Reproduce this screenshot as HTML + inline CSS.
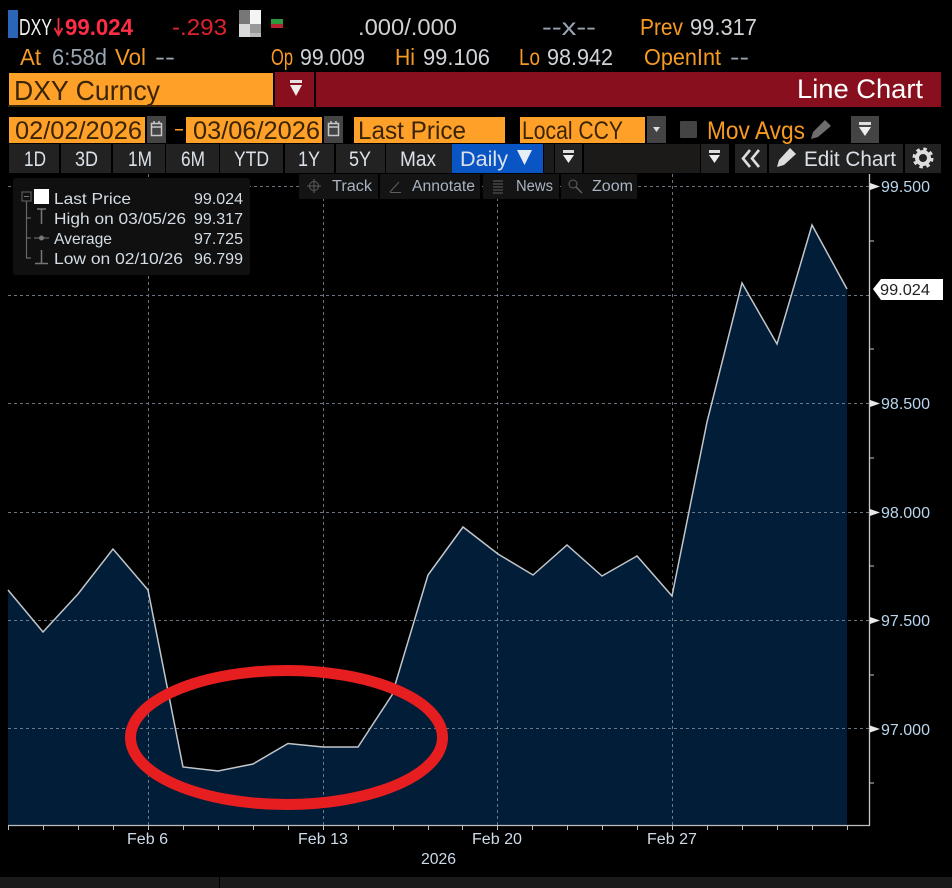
<!DOCTYPE html>
<html><head><meta charset="utf-8"><title>DXY Curncy Line Chart</title>
<style>
html,body{margin:0;padding:0;background:#000;width:952px;height:888px;overflow:hidden}
svg{display:block}
text{font-family:"Liberation Sans",sans-serif}
.o{fill:#f79a22}.g{fill:#9aa6b4}.d{fill:#3a2404}
</style></head><body>
<svg width="952" height="888" viewBox="0 0 952 888" xmlns="http://www.w3.org/2000/svg">
<rect width="952" height="888" fill="#000"/>
<!-- chart -->
<polygon points="8,590 43,632 78,594 113,549 148,590 183,767 218,771 253,764 288,743.5 323,747 358,747 392,695 428,575 463,527 498,554 533,575 567,545 602,576 637,556 672,596 707,422 742,283 777,344 812,225 847,289 847,825 8,825" fill="#021d38"/>
<g stroke="#8492a0" stroke-width="1" stroke-dasharray="3 3" fill="none" opacity=".8">
<path d="M8 186.500H869M8 295.500H869M8 403.500H869M8 512.500H869M8 620.500H869M8 728.500H869"/>
<path d="M148.500 174V825M323.500 174V825M497.500 174V825M672.500 174V825"/>
</g>
<polyline points="8,590 43,632 78,594 113,549 148,590 183,767 218,771 253,764 288,743.500 323,747 358,747 392,695 428,575 463,527 498,554 533,575 567,545 602,576 637,556 672,596 707,422 742,283 777,344 812,225 847,289" fill="none" stroke="#c2c6ca" stroke-width="1.500"/>
<!-- axes -->
<path d="M8 825.500H870" stroke="#bdbdbd" stroke-width="1.300"/>
<path d="M8.500 825V830M43.500 825V830M78.500 825V830M113.500 825V830M148.500 825V830M183.500 825V830M218.500 825V830M253.500 825V830M288.500 825V830M323.500 825V830M358.500 825V830M393.500 825V830M428.500 825V830M462.500 825V830M497.500 825V830M532.500 825V830M567.500 825V830M602.500 825V830M637.500 825V830M672.500 825V830M707.500 825V830M742.500 825V830M777.500 825V830M812.500 825V830M847.500 825V830" stroke="#bdbdbd" stroke-width="1"/>
<path d="M869.500 174V826" stroke="#c8c8c8" stroke-width="1.300"/>
<path d="M869 241H874M869 349H874M869 458H874M869 566H874M869 675H874M869 783H874" stroke="#c8c8c8" stroke-width="1"/>
<g fill="#e8e8e8"><path d="M870 183L880 186.500L870 190ZM870 509L880 512.500L870 516ZM870 400L880 403.500L870 407ZM870 617L880 620.500L870 624ZM870 725.500L880 729L870 732.500Z"/></g>
<g font-size="15.500" style="fill:#b9d6ee">
<text x="881" y="192" textLength="49" lengthAdjust="spacingAndGlyphs">99.500</text>
<text x="881" y="409" textLength="49" lengthAdjust="spacingAndGlyphs">98.500</text>
<text x="881" y="518" textLength="49" lengthAdjust="spacingAndGlyphs">98.000</text>
<text x="881" y="626" textLength="49" lengthAdjust="spacingAndGlyphs">97.500</text>
<text x="881" y="735" textLength="49" lengthAdjust="spacingAndGlyphs">97.000</text>
</g>
<polygon points="873,289 881,279 943,279 943,300 881,300" fill="#fff"/>
<text x="880" y="295" font-size="15.500" fill="#222" textLength="50" lengthAdjust="spacingAndGlyphs">99.024</text>
<g font-size="15.500" style="fill:#cfdcea">
<text x="127" y="844" textLength="41" lengthAdjust="spacingAndGlyphs">Feb 6</text>
<text x="298" y="844" textLength="50" lengthAdjust="spacingAndGlyphs">Feb 13</text>
<text x="472" y="844" textLength="50" lengthAdjust="spacingAndGlyphs">Feb 20</text>
<text x="647" y="844" textLength="50" lengthAdjust="spacingAndGlyphs">Feb 27</text>
<text x="421" y="864" textLength="35" lengthAdjust="spacingAndGlyphs">2026</text>
</g>
<!-- ellipse -->
<ellipse cx="286.500" cy="737.500" rx="156" ry="67" fill="none" stroke="#e61e20" stroke-width="11"/>
<!-- bottom -->
<rect x="0" y="877" width="952" height="11" fill="#1a1a1a"/><rect x="219" y="877" width="1" height="11" fill="#000"/>
<!-- top row -->
<rect x="8" y="10" width="10" height="28" fill="#2a66b8"/>
<text x="19" y="35" font-size="23" fill="#f4f4f4" textLength="33" lengthAdjust="spacingAndGlyphs">DXY</text>
<path d="M58.500 18V33M54.500 28L58.500 35L62.500 28" fill="none" stroke="#f0303f" stroke-width="1.800"/>
<text x="65" y="35" font-size="23" font-weight="700" fill="#ff2c46" textLength="68" lengthAdjust="spacingAndGlyphs">99.024</text>
<text x="172" y="35" font-size="23" fill="#e0222d" textLength="55" lengthAdjust="spacingAndGlyphs">-.293</text>
<rect x="239" y="10" width="22" height="27" fill="#bbb"/><rect x="250" y="10" width="11" height="14" fill="#f4f4f4"/><rect x="239" y="10" width="11" height="14" fill="#777"/><rect x="250" y="24" width="11" height="9" fill="#999"/><rect x="239" y="24" width="11" height="13" fill="#d8d8d8"/>
<rect x="271" y="19" width="12" height="5" fill="#2e9a3e"/><rect x="271" y="24" width="12" height="4" fill="#b52430"/>
<text x="358" y="35" font-size="23" fill="#d0d0d0" textLength="99" lengthAdjust="spacingAndGlyphs">.000/.000</text>
<text x="542" y="35" font-size="23" class="g" textLength="54" lengthAdjust="spacingAndGlyphs">--x--</text>
<text x="640" y="35" font-size="23" class="o" textLength="43" lengthAdjust="spacingAndGlyphs">Prev</text>
<text x="690" y="35" font-size="23" fill="#d0d4d8" textLength="67" lengthAdjust="spacingAndGlyphs">99.317</text>
<!-- second row -->
<g font-size="23">
<text x="20" y="65" class="o" textLength="21" lengthAdjust="spacingAndGlyphs">At</text>
<text x="52" y="65" class="g" textLength="55" lengthAdjust="spacingAndGlyphs">6:58d</text>
<text x="115" y="65" class="o" textLength="31" lengthAdjust="spacingAndGlyphs">Vol</text>
<text x="155" y="65" class="g" textLength="20" lengthAdjust="spacingAndGlyphs">--</text>
<text x="271" y="65" class="o" textLength="22" lengthAdjust="spacingAndGlyphs">Op</text>
<text x="300" y="65" fill="#d0d4d8" textLength="65" lengthAdjust="spacingAndGlyphs">99.009</text>
<text x="395" y="65" class="o" textLength="20" lengthAdjust="spacingAndGlyphs">Hi</text>
<text x="423" y="65" fill="#d0d4d8" textLength="67" lengthAdjust="spacingAndGlyphs">99.106</text>
<text x="519" y="65" class="o" textLength="21" lengthAdjust="spacingAndGlyphs">Lo</text>
<text x="547" y="65" fill="#d0d4d8" textLength="66" lengthAdjust="spacingAndGlyphs">98.942</text>
<text x="644" y="65" class="o" textLength="77" lengthAdjust="spacingAndGlyphs">OpenInt</text>
<text x="730" y="65" class="g" textLength="19" lengthAdjust="spacingAndGlyphs">--</text>
</g>
<!-- third row -->
<rect x="9" y="73" width="264" height="32" fill="#ffa028"/><rect x="8" y="105" width="266" height="2" fill="#3a2408"/>
<text x="14" y="100" font-size="28" class="d" textLength="146" lengthAdjust="spacingAndGlyphs">DXY Curncy</text>
<rect x="275" y="72" width="39" height="35" fill="#880f1e"/>
<rect x="290" y="80" width="12" height="3" fill="#e8e0e0"/><path d="M290 85H302L296 96Z" fill="#f0ecec"/>
<rect x="316" y="72" width="625" height="35" fill="#880f1e"/>
<text x="797" y="98" font-size="27" fill="#fff" textLength="126" lengthAdjust="spacingAndGlyphs">Line Chart</text>
<!-- fourth row -->
<rect x="9" y="117" width="136" height="26" fill="#ffa028"/>
<text x="15" y="139" font-size="25" class="d" textLength="127" lengthAdjust="spacingAndGlyphs">02/02/2026</text>
<rect x="147" y="116" width="19" height="27" fill="#444"/>
<path d="M151.500 123.500H161.500V135.500H151.500ZM151.500 127H161.500M154 121V124M159 121V124" fill="none" stroke="#c8c8c8" stroke-width="1.500"/>
<rect x="175" y="129" width="8" height="1.500" fill="#ffa028"/>
<rect x="186" y="117" width="136" height="26" fill="#ffa028"/>
<text x="193" y="139" font-size="25" class="d" textLength="127" lengthAdjust="spacingAndGlyphs">03/06/2026</text>
<rect x="324" y="116" width="19" height="27" fill="#444"/>
<path d="M328.500 123.500H338.500V135.500H328.500ZM328.500 127H338.500M331 121V124M336 121V124" fill="none" stroke="#c8c8c8" stroke-width="1.500"/>
<rect x="354" y="117" width="151" height="26" fill="#ffa028"/>
<text x="358" y="139" font-size="25" class="d" textLength="108" lengthAdjust="spacingAndGlyphs">Last Price</text>
<rect x="520" y="117" width="125" height="26" fill="#ffa028"/>
<text x="522" y="139" font-size="25" class="d" textLength="101" lengthAdjust="spacingAndGlyphs">Local CCY</text>
<rect x="647" y="116" width="19" height="27" fill="#444"/><path d="M653 127H660L656.500 132Z" fill="#ddd"/>
<rect x="680" y="121" width="17" height="17" rx="1" fill="#444"/>
<text x="707" y="139" font-size="25" class="o" textLength="98" lengthAdjust="spacingAndGlyphs">Mov Avgs</text>
<path d="M825 120L831 126L818 137L811 139L813 132Z" fill="#6e6e6e"/>
<rect x="851" y="116" width="28" height="27" fill="#444"/>
<rect x="859" y="122" width="12" height="3" fill="#ddd"/><path d="M859 127H871L865 136Z" fill="#eee"/>
<!-- fifth row -->
<g fill="#222">
<rect x="9" y="144" width="50" height="29"/><rect x="61" y="144" width="50" height="29"/><rect x="113" y="144" width="52" height="29"/><rect x="166" y="144" width="53" height="29"/><rect x="220" y="144" width="63" height="29"/><rect x="285" y="144" width="49" height="29"/><rect x="336" y="144" width="49" height="29"/><rect x="386" y="144" width="66" height="29"/>
<rect x="544" y="144" width="10" height="29" fill="#1c1c1c"/><rect x="555" y="144" width="27" height="29"/><rect x="584" y="144" width="116" height="29" fill="#1c1a18"/><rect x="701" y="144" width="28" height="29"/><rect x="735" y="144" width="32" height="29"/><rect x="769" y="144" width="134" height="29"/><rect x="905" y="144" width="36" height="29"/>
</g>
<rect x="452" y="144" width="91" height="29" fill="#0a55c4"/>
<g font-size="21" fill="#dbe1e8">
<text x="24" y="166" textLength="22" lengthAdjust="spacingAndGlyphs">1D</text>
<text x="75" y="166" textLength="23" lengthAdjust="spacingAndGlyphs">3D</text>
<text x="128" y="166" textLength="24" lengthAdjust="spacingAndGlyphs">1M</text>
<text x="181" y="166" textLength="24" lengthAdjust="spacingAndGlyphs">6M</text>
<text x="234" y="166" textLength="35" lengthAdjust="spacingAndGlyphs">YTD</text>
<text x="298" y="166" textLength="22" lengthAdjust="spacingAndGlyphs">1Y</text>
<text x="349" y="166" textLength="22" lengthAdjust="spacingAndGlyphs">5Y</text>
<text x="400" y="166" textLength="36" lengthAdjust="spacingAndGlyphs">Max</text>
<text x="460" y="166" textLength="48" lengthAdjust="spacingAndGlyphs">Daily</text>
<text x="804" y="166" textLength="92" lengthAdjust="spacingAndGlyphs">Edit Chart</text>
</g>
<path d="M517 150H532L524.500 165Z" fill="#e8eef6"/>
<rect x="563" y="150" width="11" height="3" fill="#ddd"/><path d="M563 155H574L568.500 163Z" fill="#eee"/>
<rect x="709" y="150" width="11" height="3" fill="#ddd"/><path d="M709 155H720L714.500 163Z" fill="#eee"/>
<path d="M750 150L743 158.500L750 167M759 150L752 158.500L759 167" fill="none" stroke="#ddd" stroke-width="2.600"/>
<path d="M790 148L796 154L784 165L777 167L779 160Z" fill="#ddd"/>
<circle cx="923" cy="158" r="6" fill="none" stroke="#ddd" stroke-width="4"/>
<circle cx="923" cy="158" r="9" fill="none" stroke="#ddd" stroke-width="3" stroke-dasharray="3.500 3.570"/>
<!-- legend -->
<rect x="13" y="178" width="237" height="97" rx="3" fill="#101010"/>
<rect x="22" y="192" width="9" height="9" fill="none" stroke="#666"/><path d="M24 196.500H29" stroke="#777"/>
<path d="M26.500 201V258H31M26.500 218H31M26.500 238H31" fill="none" stroke="#666" stroke-width="1.200"/>
<rect x="34" y="189" width="15" height="15" fill="#fff"/>
<path d="M37 209H46M41.500 209V224" stroke="#777" stroke-width="1.500"/>
<path d="M34 238H49" stroke="#777" stroke-width="1"/><circle cx="41.500" cy="238" r="2.500" fill="#777"/>
<path d="M41.500 250V263M35 263.500H48" stroke="#777" stroke-width="1.500"/>
<g font-size="16" fill="#d4dde6">
<text x="54" y="204" textLength="77" lengthAdjust="spacingAndGlyphs">Last Price</text>
<text x="54" y="224" textLength="132" lengthAdjust="spacingAndGlyphs">High on 03/05/26</text>
<text x="54" y="244" textLength="58" lengthAdjust="spacingAndGlyphs">Average</text>
<text x="54" y="264" textLength="129" lengthAdjust="spacingAndGlyphs">Low on 02/10/26</text>
<text x="194" y="204" textLength="49" lengthAdjust="spacingAndGlyphs">99.024</text>
<text x="194" y="224" textLength="49" lengthAdjust="spacingAndGlyphs">99.317</text>
<text x="194" y="244" textLength="49" lengthAdjust="spacingAndGlyphs">97.725</text>
<text x="194" y="264" textLength="49" lengthAdjust="spacingAndGlyphs">96.799</text>
</g>
<!-- toolbar -->
<g fill="#141414"><rect x="299" y="174" width="79" height="25"/><rect x="380" y="174" width="100" height="25"/><rect x="483" y="174" width="76" height="25"/><rect x="561" y="174" width="76" height="25"/></g>
<g stroke="#5e5e5e" fill="none" stroke-width="1">
<circle cx="314" cy="186" r="4.500"/><path d="M314 179V193M307 186H321"/>
<path d="M390 192L399 182M390 192.500H401"/>
<path d="M493 181H503M493 184H503M493 187H503M493 190H503M493 193H503"/>
<circle cx="573" cy="184" r="4"/><path d="M576 187L582 193" stroke-width="1.500"/>
</g>
<g font-size="15.500" fill="#a8b4c2">
<text x="332" y="191" textLength="40" lengthAdjust="spacingAndGlyphs">Track</text>
<text x="412" y="191" textLength="63" lengthAdjust="spacingAndGlyphs">Annotate</text>
<text x="516" y="191" textLength="37" lengthAdjust="spacingAndGlyphs">News</text>
<text x="592" y="191" textLength="41" lengthAdjust="spacingAndGlyphs">Zoom</text>
</g>
</svg>
</body></html>
